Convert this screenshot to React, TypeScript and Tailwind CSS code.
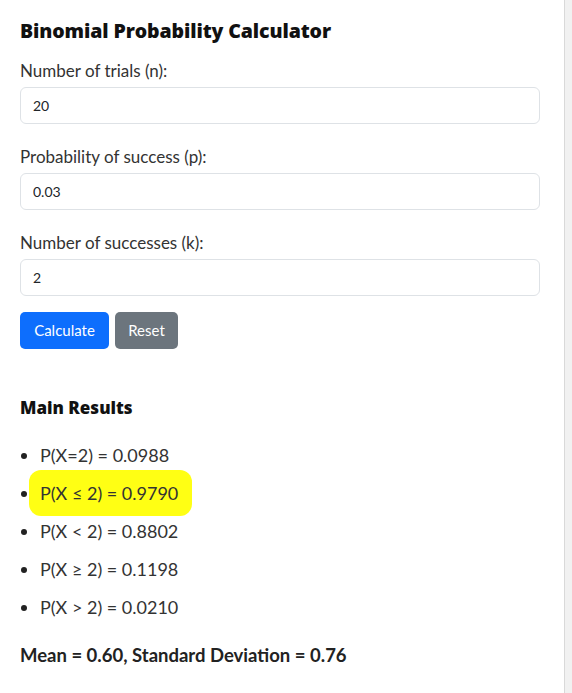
import React from "react";

const fields = [
  { label: "Number of trials (n):", value: "20" },
  { label: "Probability of success (p):", value: "0.03" },
  { label: "Number of successes (k):", value: "2" },
];

const results = [
  { text: "P(X=2) = 0.0988" },
  { text: "P(X ≤ 2) = 0.9790", marked: true },
  { text: "P(X < 2) = 0.8802" },
  { text: "P(X ≥ 2) = 0.1198" },
  { text: "P(X > 2) = 0.0210" },
];

function App() {
  return (
    <div className="flex min-h-[693px] w-full bg-[#f1f1f1] font-['Lato','Liberation_Sans',sans-serif] text-[#212529]">
      <div className="w-[565px] border-r border-[#d9d9d9] bg-white pl-5 pr-[24px] pt-[19px]">
        <h2 className="font-['Open_Sans','Lato',sans-serif] text-[19.5px] leading-6 font-extrabold tracking-[-0.1px] text-[#111]">
          Binomial Probability Calculator
        </h2>
        <div className="mt-[16px]">
          {fields.map((f) => (
            <div key={f.label} className="mb-[21px]">
              <label className="block text-[17px] leading-6 text-[#333]">{f.label}</label>
              <input
                readOnly
                value={f.value}
                className="mt-[4px] block h-[37px] w-full rounded-[6px] border border-[#dee2e6] px-3 text-[14px] text-[#212529] outline-none"
              />
            </div>
          ))}
        </div>
        <div className="-mt-[5px] flex gap-[6px]">
          <button className="h-[37px] w-[89px] rounded-[5px] bg-[#0d6efd] text-[15px] text-white">
            Calculate
          </button>
          <button className="h-[37px] w-[63px] rounded-[5px] bg-[#6c757d] text-[15px] text-white">
            Reset
          </button>
        </div>
        <h3 className="mt-[47px] font-['Open_Sans','Lato',sans-serif] text-[17px] leading-6 font-extrabold tracking-[0px] text-[#111]">
          Main Results
        </h3>
        <ul className="mt-[23px] list-disc pl-[20px] text-[18px] leading-6 text-[#333] marker:text-[#222]">
          {results.map((r) => (
            <li key={r.text} className="mb-[14px]">
              {r.marked ? (
                <span className="-ml-[11px] rounded-[12px] bg-[#ffff14] py-[12px] pr-[14px] pl-[11px]">
                  {r.text}
                </span>
              ) : (
                r.text
              )}
            </li>
          ))}
        </ul>
        <p className="mt-[24px] text-[18.5px] leading-6 font-bold text-[#222]">
          Mean = 0.60, Standard Deviation = 0.76
        </p>
      </div>
      <div className="flex-1" />
    </div>
  );
}

export default App;
